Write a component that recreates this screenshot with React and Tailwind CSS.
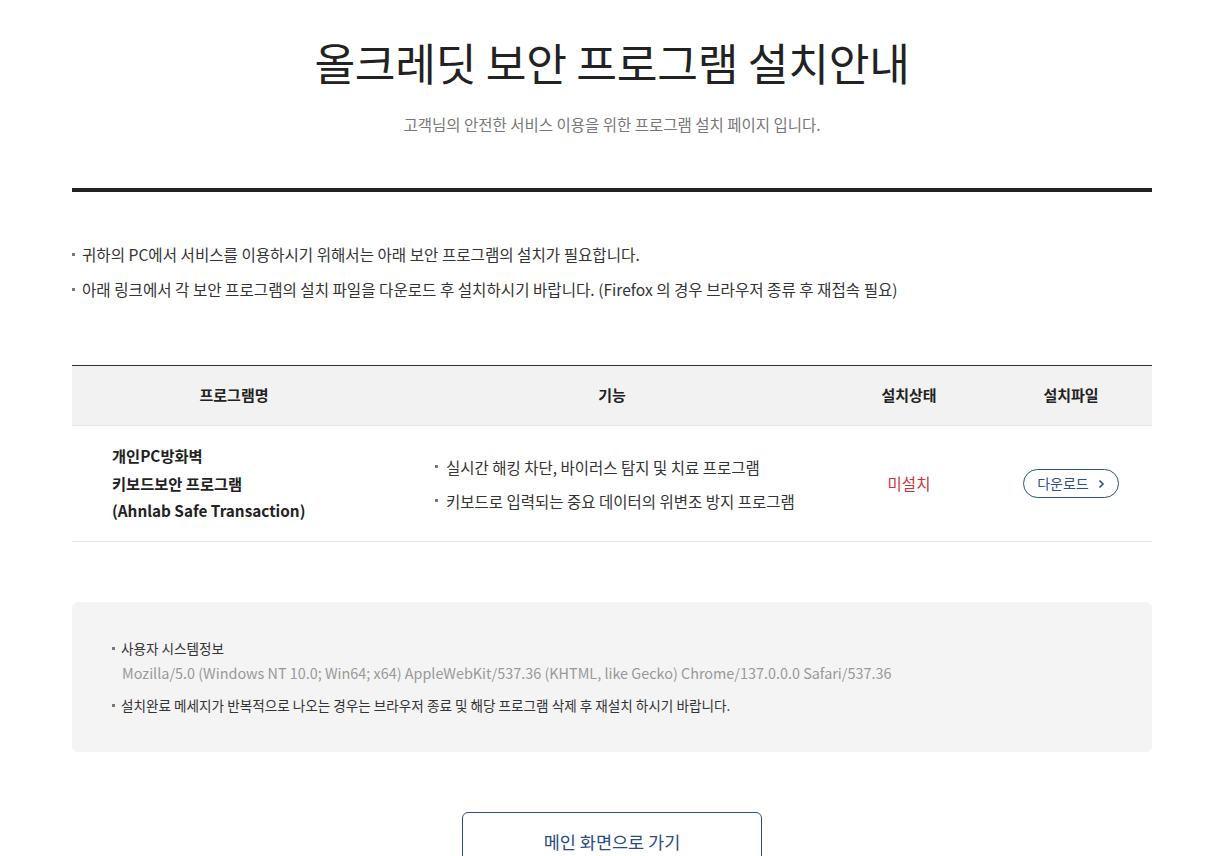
import React from "react";

const F = { fontFamily: '"Noto Sans CJK KR", "Noto Sans", sans-serif' };

function Dot({ className = "" }) {
  return <span className={`inline-block w-[3px] h-[3px] bg-[#777] shrink-0 ${className}`} />;
}

export default function App() {
  return (
    <div style={F} className="w-[1224px] h-[856px] overflow-hidden bg-white text-[#222]">
      <div className="w-[1080px] mx-auto">
        <div className="pt-[30px] text-center">
          <h1 className="text-[44.3px] leading-[64px] font-normal text-[#222] tracking-[-0.3px]">올크레딧 보안 프로그램 설치안내</h1>
          <p className="mt-[20px] text-[15.5px] leading-[20px] text-[#777]">고객님의 안전한 서비스 이용을 위한 프로그램 설치 페이지 입니다.</p>
        </div>
        <div className="mt-[54px] h-[4px] bg-[#222]" />

        <ul className="mt-[50px] text-[15.6px] text-[#333] leading-[24px]">
          <li className="flex items-center gap-[7px]"><Dot />귀하의 PC에서 서비스를 이용하시기 위해서는 아래 보안 프로그램의 설치가 필요합니다.</li>
          <li className="mt-[11px] flex items-center gap-[7px]"><Dot />아래 링크에서 각 보안 프로그램의 설치 파일을 다운로드 후 설치하시기 바랍니다. (Firefox 의 경우 브라우저 종류 후 재접속 필요)</li>
        </ul>

        <div className="mt-[64px] border-t border-[#333]">
          <div className="grid grid-cols-[324px_432px_162px_162px] bg-[#f2f2f2] h-[60px] items-center text-[15px] font-bold text-[#222] border-b border-[#e6e6e6]">
            <div className="text-center">프로그램명</div>
            <div className="text-center">기능</div>
            <div className="text-center">설치상태</div>
            <div className="text-center">설치파일</div>
          </div>
          <div className="grid grid-cols-[324px_432px_162px_162px] h-[116px] items-center border-b border-[#e6e6e6]">
            <div className="pl-[40px] text-[15.3px] font-bold leading-[27.5px] text-[#222]">
              <div>개인PC방화벽</div>
              <div>키보드보안 프로그램</div>
              <div>(Ahnlab Safe Transaction)</div>
            </div>
            <div className="pl-[39px] text-[15.5px] text-[#333] leading-[22px]">
              <div className="flex items-center gap-[8px]"><Dot />실시간 해킹 차단, 바이러스 탐지 및 치료 프로그램</div>
              <div className="mt-[12px] flex items-center gap-[8px]"><Dot />키보드로 입력되는 중요 데이터의 위변조 방지 프로그램</div>
            </div>
            <div className="text-center text-[15.5px] text-[#d0313e]">미설치</div>
            <div className="flex justify-center">
              <button className="h-[29px] w-[96px] rounded-full border border-[#2d4f8c] text-[#2d4f8c] text-[14px] flex items-center justify-center gap-[9px]">
                다운로드
                <svg width="7" height="10" viewBox="0 0 7 10" fill="none"><path d="M1.5 1.5L5 5L1.5 8.5" stroke="#2d4f8c" strokeWidth="1.6" /></svg>
              </button>
            </div>
          </div>
        </div>

        <div className="mt-[60px] bg-[#f4f4f4] rounded-[6px] h-[150px] pl-[40px] pt-[36px] text-[13.6px] leading-[20px]">
          <div className="flex items-center gap-[6px] text-[#333]"><Dot />사용자 시스템정보</div>
          <div className="mt-[5px] pl-[10px] text-[14.4px] text-[#999]">Mozilla/5.0 (Windows NT 10.0; Win64; x64) AppleWebKit/537.36 (KHTML, like Gecko) Chrome/137.0.0.0 Safari/537.36</div>
          <div className="mt-[12px] flex items-center gap-[6px] text-[#333]"><Dot />설치완료 메세지가 반복적으로 나오는 경우는 브라우저 종료 및 해당 프로그램 삭제 후 재설치 하시기 바랍니다.</div>
        </div>

        <div className="mt-[60px] flex justify-center">
          <button className="w-[300px] h-[60px] border border-[#2a4f8f] rounded-[6px] text-[17.5px] text-[#2a4a82]">메인 화면으로 가기</button>
        </div>
      </div>
    </div>
  );
}
